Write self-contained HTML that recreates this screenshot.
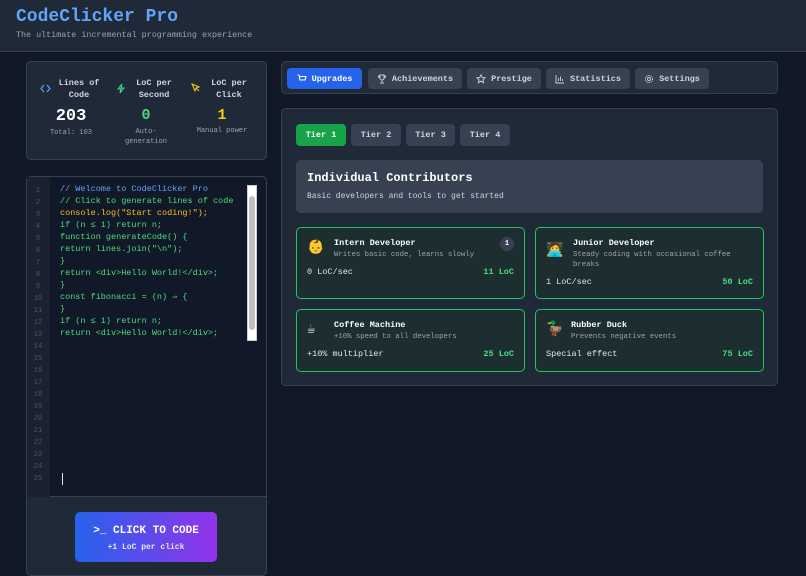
<!DOCTYPE html>
<html><head><meta charset="utf-8">
<style>
*{box-sizing:border-box;margin:0;padding:0}
body{width:806px;height:571px;overflow:hidden;background:#111827;font-family:"Liberation Mono","DejaVu Sans Mono",monospace;color:#e5e7eb;position:relative}
.a{position:absolute}
.hdr{left:0;top:0;width:806px;height:52px;background:#1f2937;border-bottom:1px solid #374151}
.panel{background:#1f2937;border:1px solid #374151;border-radius:5px}
.btn{position:absolute;top:6px;height:21px;border-radius:4px;background:#374151;color:#d1d5db;font-size:8.5px;font-weight:bold;display:flex;align-items:center;justify-content:center;gap:5px}
.btn svg{width:10px;height:10px}
.tier{position:absolute;top:15px;height:22px;border-radius:4px;background:#374151;color:#d1d5db;font-size:8.5px;font-weight:bold;display:flex;align-items:center;justify-content:center}
.card{position:absolute;border:1.5px solid #22c55e;border-radius:5px;background:#1c2e30}
.card .ic{position:absolute;left:10px;font-size:14px}
.card .t{position:absolute;font-size:8.5px;font-weight:bold;color:#fff}
.card .d{position:absolute;font-size:7.3px;color:#9ca3af;line-height:10px}
.card .l{position:absolute;left:10px;font-size:8.5px;color:#e5e7eb}
.card .p{position:absolute;right:10px;font-size:8.5px;font-weight:bold;color:#4ade80}
.ln{position:absolute;left:26px;width:24px;text-align:center;font-size:7px;color:#4b5563}
.cl{position:absolute;left:60px;font-size:8.5px;color:#4ade80;white-space:pre}
</style></head><body>
<div class="a hdr"></div>
<div class="a" style="left:16px;top:7px;font-size:18px;font-weight:bold;color:#60a5fa">CodeClicker Pro</div>
<div class="a" style="left:16px;top:30px;font-size:8.4px;color:#9ca3af">The ultimate incremental programming experience</div>

<div class="a panel" style="left:26px;top:61px;width:241px;height:99px"></div>
<svg class="a" style="left:40px;top:84px" width="11" height="9" viewBox="0 0 11 9"><path d="M4 1L1 4.5 4 8M7 1l3 3.5L7 8" fill="none" stroke="#60a5fa" stroke-width="1.2"/></svg>
<div class="a" style="left:56px;top:77px;width:46px;text-align:center;font-size:8.5px;font-weight:bold;line-height:12px;color:#d1d5db">Lines of<br>Code</div>
<svg class="a" style="left:116px;top:83px" width="10" height="11" viewBox="0 0 10 11"><path d="M6 1L2 6h3l-1 4 4-5H5z" fill="none" stroke="#4ade80" stroke-width="1"/></svg>
<div class="a" style="left:131px;top:77px;width:46px;text-align:center;font-size:8.5px;font-weight:bold;line-height:12px;color:#d1d5db">LoC per<br>Second</div>
<svg class="a" style="left:191px;top:83px" width="10" height="10" viewBox="0 0 10 10"><path d="M1 1l7 3-3 1-1 3z M5 5l3 3" fill="none" stroke="#facc15" stroke-width="1"/></svg>
<div class="a" style="left:206px;top:77px;width:46px;text-align:center;font-size:8.5px;font-weight:bold;line-height:12px;color:#d1d5db">LoC per<br>Click</div>
<div class="a" style="left:46px;top:107px;width:50px;text-align:center;font-size:17px;font-weight:bold;color:#fff">203</div>
<div class="a" style="left:121px;top:107px;width:50px;text-align:center;font-size:15px;font-weight:bold;color:#4ade80">0</div>
<div class="a" style="left:197px;top:107px;width:50px;text-align:center;font-size:15px;font-weight:bold;color:#facc15">1</div>
<div class="a" style="left:36px;top:129px;width:70px;text-align:center;font-size:7px;color:#9ca3af">Total: 103</div>
<div class="a" style="left:116px;top:127px;width:60px;text-align:center;font-size:7px;line-height:10px;color:#9ca3af">Auto-<br>generation</div>
<div class="a" style="left:187px;top:127px;width:70px;text-align:center;font-size:7px;color:#9ca3af">Manual power</div>

<div class="a" style="left:26px;top:176px;width:241px;height:400px;background:#1f2937;border:1px solid #374151;border-radius:5px"></div>
<div class="a" style="left:27px;top:177px;width:239px;height:320px;background:#111827;border-bottom:1px solid #374151;border-radius:5px 5px 0 0"></div>
<div class="a" style="left:27px;top:177px;width:23px;height:320px;background:#1a2230"></div>
<div class="a" style="left:247px;top:185px;width:10px;height:156px;background:#fff;border:1px solid #ccc"></div>
<div class="a" style="left:249px;top:196px;width:6px;height:134px;background:#c1c1c1;border-radius:3px"></div>
<div class="cl" style="top:184px;color:#60a5fa">// Welcome to CodeClicker Pro</div>
<div class="cl" style="top:196px">// Click to generate lines of code</div>
<div class="cl" style="top:208px;color:#fbbf24">console.log("Start coding!");</div>
<div class="cl" style="top:220px">if (n ≤ 1) return n;</div>
<div class="cl" style="top:232px">function generateCode() {</div>
<div class="cl" style="top:244px">return lines.join("\n");</div>
<div class="cl" style="top:256px">}</div>
<div class="cl" style="top:268px">return &lt;div&gt;Hello World!&lt;/div&gt;;</div>
<div class="cl" style="top:280px">}</div>
<div class="cl" style="top:292px">const fibonacci = (n) ⇒ {</div>
<div class="cl" style="top:304px">}</div>
<div class="cl" style="top:316px">if (n ≤ 1) return n;</div>
<div class="cl" style="top:328px">return &lt;div&gt;Hello World!&lt;/div&gt;;</div>
<div class="a" style="left:62px;top:473px;width:1px;height:12px;background:#e5e7eb"></div>
<div class="a" style="left:75px;top:512px;width:142px;height:50px;border-radius:5px;background:linear-gradient(90deg,#2563eb,#9333ea)"></div>
<div class="a" style="left:75px;top:525px;width:142px;text-align:center;font-size:11px;font-weight:bold;color:#fff">&gt;_ CLICK TO CODE</div>
<div class="a" style="left:75px;top:543px;width:142px;text-align:center;font-size:8px;font-weight:bold;color:#e5e7eb">+1 LoC per click</div>

<div class="a panel" style="left:281px;top:61px;width:497px;height:33px">
<div class="btn" style="left:5px;width:75px;background:#2563eb;color:#fff"><svg viewBox="0 0 10 10"><path d="M0.5 1h1.5l1 5h5l1-3.5H2.5M4 8.5h.1M7.5 8.5h.1" fill="none" stroke="#fff" stroke-width="1.1"/></svg>Upgrades</div>
<div class="btn" style="left:86px;width:94px"><svg viewBox="0 0 10 10"><path d="M3 1h4v3a2 2 0 0 1-4 0zM5 6v2M3 9h4M3 2H1.5a1.5 1.5 0 0 0 1.5 2M7 2h1.5A1.5 1.5 0 0 1 7 4" fill="none" stroke="#d1d5db" stroke-width="0.9"/></svg>Achievements</div>
<div class="btn" style="left:185px;width:74px"><svg viewBox="0 0 10 10"><path d="M5 .8l1.2 2.7 2.9.3-2.2 2 .7 2.9L5 7.2 2.4 8.7l.7-2.9-2.2-2 2.9-.3z" fill="none" stroke="#d1d5db" stroke-width="0.9"/></svg>Prestige</div>
<div class="btn" style="left:264px;width:84px"><svg viewBox="0 0 10 10"><path d="M1 1v8h8M3.5 7V4M5.5 7V2.5M7.5 7V5" fill="none" stroke="#d1d5db" stroke-width="0.9"/></svg>Statistics</div>
<div class="btn" style="left:353px;width:74px"><svg viewBox="0 0 10 10"><circle cx="5" cy="5" r="1.5" fill="none" stroke="#d1d5db" stroke-width="0.9"/><circle cx="5" cy="5" r="3.6" fill="none" stroke="#d1d5db" stroke-width="0.9" stroke-dasharray="1.5 0.8"/></svg>Settings</div>
</div>

<div class="a panel" style="left:281px;top:108px;width:497px;height:278px">
<div class="tier" style="left:14px;width:50px;background:#16a34a;color:#fff">Tier 1</div>
<div class="tier" style="left:69px;width:50px">Tier 2</div>
<div class="tier" style="left:124px;width:49px">Tier 3</div>
<div class="tier" style="left:178px;width:50px">Tier 4</div>
<div class="a" style="left:14px;top:51px;width:467px;height:53px;background:#374151;border-radius:5px"></div>
<div class="a" style="left:25px;top:62px;font-size:12px;font-weight:bold;color:#fff">Individual Contributors</div>
<div class="a" style="left:25px;top:83px;font-size:8px;color:#d1d5db">Basic developers and tools to get started</div>
</div>

<div class="card" style="left:296px;top:227px;width:229px;height:72px">
<div class="ic" style="top:11px">👶</div>
<div class="t" style="left:37px;top:10px">Intern Developer</div>
<div class="d" style="left:37px;top:22px">Writes basic code, learns slowly</div>
<div class="a" style="left:203px;top:9px;width:14px;height:14px;border-radius:7px;background:#374151;color:#fff;font-size:7px;font-weight:bold;text-align:center;line-height:14px">1</div>
<div class="l" style="top:39px">0 LoC/sec</div><div class="p" style="top:39px">11 LoC</div>
</div>
<div class="card" style="left:535px;top:227px;width:229px;height:72px">
<div class="ic" style="top:14px">🧑‍💻</div>
<div class="t" style="left:37px;top:10px">Junior Developer</div>
<div class="d" style="left:37px;top:22px">Steady coding with occasional coffee<br>breaks</div>
<div class="l" style="top:49px">1 LoC/sec</div><div class="p" style="top:49px">50 LoC</div>
</div>
<div class="card" style="left:296px;top:309px;width:229px;height:63px">
<div class="ic" style="top:11px">☕</div>
<div class="t" style="left:37px;top:10px">Coffee Machine</div>
<div class="d" style="left:37px;top:22px">+10% speed to all developers</div>
<div class="l" style="top:39px">+10% multiplier</div><div class="p" style="top:39px">25 LoC</div>
</div>
<div class="card" style="left:535px;top:309px;width:229px;height:63px">
<div class="ic" style="top:11px">🦆</div>
<div class="t" style="left:35px;top:10px">Rubber Duck</div>
<div class="d" style="left:35px;top:22px">Prevents negative events</div>
<div class="l" style="top:39px">Special effect</div><div class="p" style="top:39px">75 LoC</div>
</div>

<div class="ln" style="top:187px">1</div><div class="ln" style="top:199px">2</div><div class="ln" style="top:211px">3</div><div class="ln" style="top:223px">4</div><div class="ln" style="top:235px">5</div><div class="ln" style="top:247px">6</div><div class="ln" style="top:259px">7</div><div class="ln" style="top:271px">8</div><div class="ln" style="top:283px">9</div><div class="ln" style="top:295px">10</div><div class="ln" style="top:307px">11</div><div class="ln" style="top:319px">12</div><div class="ln" style="top:331px">13</div><div class="ln" style="top:343px">14</div><div class="ln" style="top:355px">15</div><div class="ln" style="top:367px">16</div><div class="ln" style="top:379px">17</div><div class="ln" style="top:391px">18</div><div class="ln" style="top:403px">19</div><div class="ln" style="top:415px">20</div><div class="ln" style="top:427px">21</div><div class="ln" style="top:439px">22</div><div class="ln" style="top:451px">23</div><div class="ln" style="top:463px">24</div><div class="ln" style="top:475px">25</div>
</body></html>
